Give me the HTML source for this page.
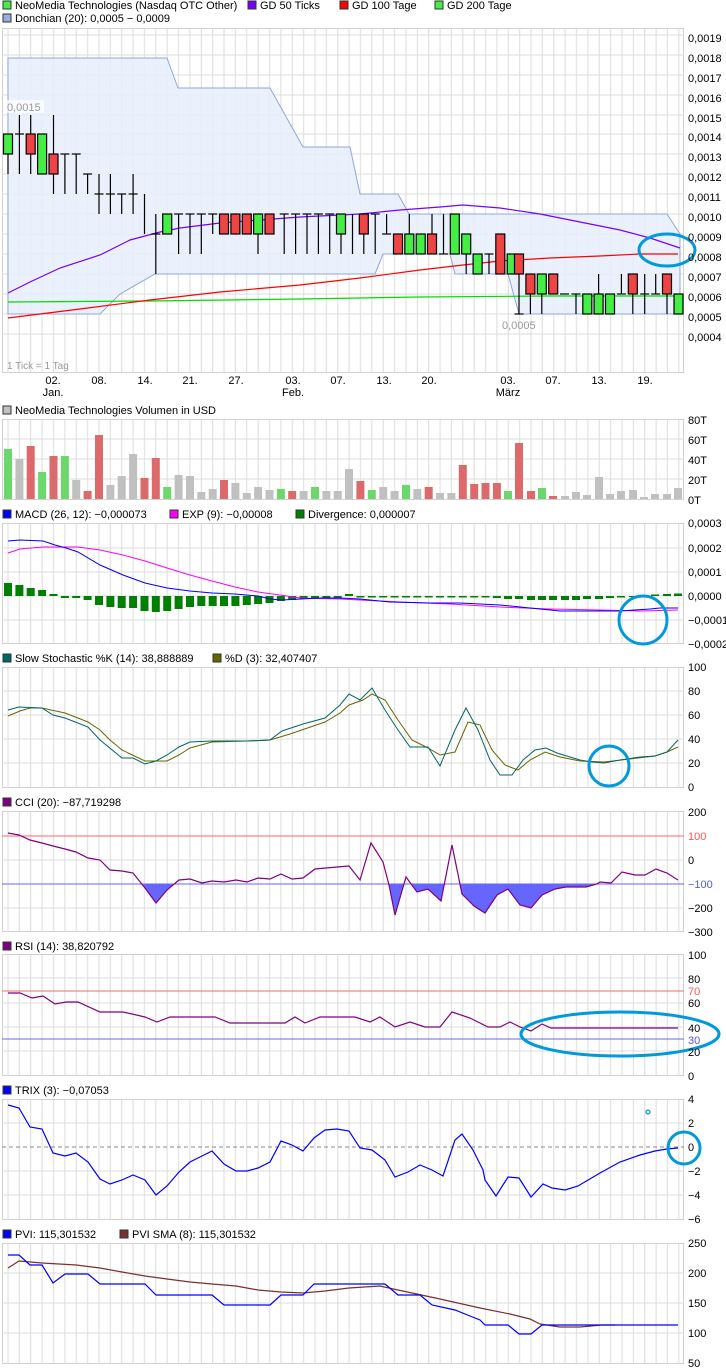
<!DOCTYPE html>
<html><head><meta charset="utf-8"><style>
html,body{margin:0;padding:0;background:#fff;width:726px;height:1372px;overflow:hidden}
svg{display:block;font-family:"Liberation Sans",sans-serif;font-size:11px}
text{fill:#000}
</style></head><body>
<svg width="726" height="1372" viewBox="0 0 726 1372" xmlns="http://www.w3.org/2000/svg">
<defs>
<pattern id="vg" x="2.315" y="0" width="11.37" height="2000" patternUnits="userSpaceOnUse">
<rect x="5.185" y="0" width="1" height="2000" fill="#dcdcdc"/>
</pattern>
<clipPath id="cciclip"><rect x="2" y="884" width="682" height="48"/></clipPath>
</defs>

<!-- ========== MAIN ========== -->
<g>
<rect x="3" y="1" width="8" height="8" fill="#44ee44" stroke="#333"/><text x="15" y="9">NeoMedia Technologies (Nasdaq OTC Other)</text>
<rect x="248" y="1" width="8" height="8" fill="#7700ff" stroke="#333"/><text x="260" y="9">GD 50 Ticks</text>
<rect x="340" y="1" width="8" height="8" fill="#ff0000" stroke="#333"/><text x="352" y="9">GD 100 Tage</text>
<rect x="435" y="1" width="8" height="8" fill="#44ee44" stroke="#333"/><text x="447" y="9">GD 200 Tage</text>
<rect x="3" y="14" width="8" height="8" fill="#99aedd" stroke="#333"/><text x="15" y="22">Donchian (20): 0,0005 − 0,0009</text>
</g>
<rect x="2.5" y="28.5" width="681" height="344" fill="url(#vg)" stroke="#d0d0d0"/>
<g stroke="#dcdcdc">
<line x1="2" y1="35" x2="684" y2="35"/><line x1="2" y1="55" x2="684" y2="55"/><line x1="2" y1="75" x2="684" y2="75"/><line x1="2" y1="95" x2="684" y2="95"/><line x1="2" y1="115" x2="684" y2="115"/><line x1="2" y1="134" x2="684" y2="134"/><line x1="2" y1="154" x2="684" y2="154"/><line x1="2" y1="174" x2="684" y2="174"/><line x1="2" y1="194" x2="684" y2="194"/><line x1="2" y1="214" x2="684" y2="214"/><line x1="2" y1="234" x2="684" y2="234"/><line x1="2" y1="254" x2="684" y2="254"/><line x1="2" y1="274" x2="684" y2="274"/><line x1="2" y1="294" x2="684" y2="294"/><line x1="2" y1="314" x2="684" y2="314"/><line x1="2" y1="334" x2="684" y2="334"/>
</g>
<!-- donchian -->
<polygon points="8,58 167,58 178,88 270,88 303,147 350,147 360,194 398,194 409,214 667,214 680,234 680,314 519,314 508,274 455,274 450,254 383,254 375,274 155,274 120,294 100,314 8,314" fill="#e6eefb" fill-opacity="0.85" stroke="#8fa8d8" stroke-width="1"/>
<!-- MAs -->
<polyline fill="none" stroke="#00dd00" stroke-width="1.2" points="8,302 150,301 300,299 420,297 550,296 678,296"/>
<polyline fill="none" stroke="#ff0000" stroke-width="1.2" points="8,318 80,309 150,300 220,292 300,285 360,278 420,270 463,265 500,261 550,258 600,256 640,254 678,254"/>
<polyline fill="none" stroke="#7700ff" stroke-width="1.2" points="8,293 30,282 60,268 100,255 130,240 160,232 180,228 220,223 260,220 300,217 360,214 400,210 440,207 463,205 500,208 540,214 580,222 620,230 650,238 680,248"/>
<!-- candles -->
<g stroke="#000" stroke-width="1.2">
<line x1="8" y1="154" x2="8" y2="174"/><rect x="3.5" y="134" width="9" height="20" fill="#44ee44"/>
<line x1="19.4" y1="115" x2="19.4" y2="174"/><line x1="15" y1="134" x2="24" y2="134"/>
<line x1="30.7" y1="115" x2="30.7" y2="174"/><rect x="26.2" y="134" width="9" height="20" fill="#ee4444"/>
<rect x="37.6" y="134" width="9" height="40" fill="#44ee44"/>
<line x1="53.5" y1="115" x2="53.5" y2="194"/><rect x="49" y="154" width="9" height="20" fill="#ee4444"/>
<line x1="64.9" y1="154" x2="64.9" y2="194"/><line x1="60.4" y1="154" x2="69.4" y2="154"/>
<line x1="76.2" y1="154" x2="76.2" y2="194"/><line x1="71.7" y1="154" x2="80.7" y2="154"/>
<line x1="87.6" y1="174" x2="87.6" y2="194"/><line x1="83.1" y1="174" x2="92.1" y2="174"/>
<line x1="99" y1="174" x2="99" y2="214"/><line x1="94.5" y1="194" x2="103.5" y2="194"/>
<line x1="110.4" y1="174" x2="110.4" y2="214"/><line x1="105.9" y1="194" x2="114.9" y2="194"/>
<line x1="121.7" y1="194" x2="121.7" y2="214"/><line x1="117.2" y1="194" x2="126.2" y2="194"/>
<line x1="133.1" y1="174" x2="133.1" y2="214"/><line x1="128.6" y1="194" x2="137.6" y2="194"/>
<line x1="144.5" y1="194" x2="144.5" y2="234"/>
<line x1="155.8" y1="214" x2="155.8" y2="274"/><line x1="151.3" y1="234" x2="160.3" y2="234"/>
<rect x="162.7" y="214" width="9" height="20" fill="#44ee44"/>
<line x1="178.6" y1="214" x2="178.6" y2="254"/><line x1="174.1" y1="214" x2="183.1" y2="214"/>
<line x1="190" y1="214" x2="190" y2="254"/><line x1="185.5" y1="214" x2="194.5" y2="214"/>
<line x1="201.3" y1="214" x2="201.3" y2="254"/><line x1="196.8" y1="214" x2="205.8" y2="214"/>
<line x1="212.7" y1="214" x2="212.7" y2="234"/><line x1="208.2" y1="214" x2="217.2" y2="214"/>
<rect x="219.5" y="214" width="9" height="20" fill="#ee4444"/>
<rect x="230.9" y="214" width="9" height="20" fill="#ee4444"/>
<rect x="242.3" y="214" width="9" height="20" fill="#ee4444"/>
<line x1="258" y1="214" x2="258" y2="254"/><rect x="253.6" y="214" width="9" height="20" fill="#44ee44"/>
<rect x="265" y="214" width="9" height="20" fill="#ee4444"/>
<line x1="284.2" y1="214" x2="284.2" y2="254"/><line x1="279.7" y1="214" x2="288.7" y2="214"/>
<line x1="295.6" y1="214" x2="295.6" y2="254"/><line x1="291.1" y1="214" x2="300.1" y2="214"/>
<line x1="307" y1="214" x2="307" y2="254"/><line x1="302.5" y1="214" x2="311.5" y2="214"/>
<line x1="318.4" y1="214" x2="318.4" y2="254"/><line x1="313.9" y1="214" x2="322.9" y2="214"/>
<line x1="329.7" y1="214" x2="329.7" y2="254"/><line x1="325.2" y1="214" x2="334.2" y2="214"/>
<line x1="341" y1="234" x2="341" y2="254"/><rect x="336.5" y="214" width="9" height="20" fill="#44ee44"/>
<line x1="352.5" y1="214" x2="352.5" y2="254"/>
<line x1="363.8" y1="234" x2="363.8" y2="254"/><rect x="359.3" y="214" width="9" height="20" fill="#ee4444"/>
<line x1="375.2" y1="214" x2="375.2" y2="254"/><line x1="370.7" y1="214" x2="379.7" y2="214"/>
<line x1="386.6" y1="214" x2="386.6" y2="234"/><line x1="382.1" y1="234" x2="391.1" y2="234"/>
<rect x="393.5" y="234" width="9" height="20" fill="#ee4444"/>
<line x1="409.3" y1="214" x2="409.3" y2="234"/><rect x="404.8" y="234" width="9" height="20" fill="#44ee44"/>
<rect x="416.2" y="234" width="9" height="20" fill="#44ee44"/>
<line x1="432" y1="214" x2="432" y2="234"/><rect x="427.5" y="234" width="9" height="20" fill="#ee4444"/>
<line x1="443.5" y1="214" x2="443.5" y2="254"/><line x1="439" y1="254" x2="448" y2="254"/>
<rect x="450.3" y="214" width="9" height="40" fill="#44ee44"/>
<line x1="466.2" y1="254" x2="466.2" y2="274"/><rect x="461.7" y="234" width="9" height="20" fill="#44ee44"/>
<rect x="473.1" y="254" width="9" height="20" fill="#44ee44"/>
<line x1="489" y1="254" x2="489" y2="274"/><line x1="484.5" y1="254" x2="493.5" y2="254"/>
<rect x="495.8" y="234" width="9" height="40" fill="#ee4444"/>
<rect x="507.2" y="254" width="9" height="20" fill="#44ee44"/>
<line x1="519" y1="274" x2="519" y2="314"/><line x1="514.5" y1="314" x2="523.5" y2="314"/><rect x="514.5" y="254" width="9" height="20" fill="#ee4444"/>
<line x1="530.4" y1="294" x2="530.4" y2="314"/><rect x="525.9" y="274" width="9" height="20" fill="#ee4444"/>
<line x1="541.8" y1="294" x2="541.8" y2="314"/><rect x="537.3" y="274" width="9" height="20" fill="#44ee44"/>
<rect x="548.7" y="274" width="9" height="20" fill="#ee4444"/>
<line x1="564.5" y1="294" x2="564.5" y2="294"/><line x1="560" y1="294" x2="569" y2="294"/>
<line x1="576" y1="294" x2="576" y2="314"/><line x1="571.5" y1="294" x2="580.5" y2="294"/>
<rect x="582.8" y="294" width="9" height="20" fill="#44ee44"/>
<line x1="598.6" y1="274" x2="598.6" y2="294"/><rect x="594.1" y="294" width="9" height="20" fill="#44ee44"/>
<rect x="605.5" y="294" width="9" height="20" fill="#44ee44"/>
<line x1="621.4" y1="274" x2="621.4" y2="294"/><line x1="616.9" y1="294" x2="625.9" y2="294"/>
<line x1="632.8" y1="294" x2="632.8" y2="314"/><rect x="628.3" y="274" width="9" height="20" fill="#ee4444"/>
<line x1="644.7" y1="274" x2="644.7" y2="314"/><line x1="640.2" y1="294" x2="649.2" y2="294"/>
<line x1="655.7" y1="274" x2="655.7" y2="294"/><line x1="651.2" y1="294" x2="660.2" y2="294"/>
<line x1="667" y1="294" x2="667" y2="314"/><rect x="662.5" y="274" width="9" height="20" fill="#ee4444"/>
<rect x="674" y="294" width="9" height="20" fill="#44ee44"/>
</g>
<rect x="6" y="100" width="38" height="13" fill="#fff" fill-opacity="0.7"/>
<text x="7" y="111" style="fill:#999">0,0015</text>
<text x="502" y="329" style="fill:#999">0,0005</text>
<text x="7" y="369" style="fill:#999;font-size:10px">1 Tick = 1 Tag</text>
<ellipse cx="667" cy="250" rx="28" ry="16" fill="none" stroke="#0099dd" stroke-width="3"/>
<g>
<text x="688" y="42">0,0019</text><text x="688" y="62">0,0018</text><text x="688" y="82">0,0017</text><text x="688" y="102">0,0016</text><text x="688" y="122">0,0015</text><text x="688" y="141">0,0014</text><text x="688" y="161">0,0013</text><text x="688" y="181">0,0012</text><text x="688" y="201">0,0011</text><text x="688" y="221">0,0010</text><text x="688" y="241">0,0009</text><text x="688" y="261">0,0008</text><text x="688" y="281">0,0007</text><text x="688" y="301">0,0006</text><text x="688" y="321">0,0005</text><text x="688" y="341">0,0004</text>
</g>
<g text-anchor="middle">
<text x="53" y="384">02.</text><text x="53" y="396">Jan.</text>
<text x="99" y="384">08.</text><text x="145" y="384">14.</text><text x="190" y="384">21.</text><text x="236" y="384">27.</text>
<text x="293" y="384">03.</text><text x="293" y="396">Feb.</text>
<text x="338" y="384">07.</text><text x="384" y="384">13.</text><text x="429" y="384">20.</text>
<text x="508" y="384">03.</text><text x="508" y="396">März</text>
<text x="553" y="384">07.</text><text x="599" y="384">13.</text><text x="645" y="384">19.</text>
</g>

<!-- ========== VOLUME ========== -->
<rect x="3" y="406" width="8" height="8" fill="#c0c0c0" stroke="#333"/><text x="15" y="414">NeoMedia Technologies Volumen in USD</text>
<rect x="2.5" y="419.5" width="681" height="80" fill="url(#vg)" stroke="#d0d0d0"/>
<g stroke="#dcdcdc"><line x1="2" y1="439" x2="684" y2="439"/><line x1="2" y1="459" x2="684" y2="459"/><line x1="2" y1="479" x2="684" y2="479"/></g>
<g>
<rect x="4" y="449" width="8" height="50" fill="#6cd86c"/>
<rect x="15.4" y="459" width="8" height="40" fill="#c0c0c0"/>
<rect x="26.7" y="446" width="8" height="53" fill="#dc6a6a"/>
<rect x="38.1" y="472" width="8" height="27" fill="#6cd86c"/>
<rect x="49.5" y="456" width="8" height="43" fill="#dc6a6a"/>
<rect x="60.9" y="456" width="8" height="43" fill="#6cd86c"/>
<rect x="72.2" y="480" width="8" height="19" fill="#c0c0c0"/>
<rect x="83.6" y="491" width="8" height="8" fill="#dc6a6a"/>
<rect x="95" y="435" width="8" height="64" fill="#dc6a6a"/>
<rect x="106.4" y="485" width="8" height="14" fill="#c0c0c0"/>
<rect x="117.7" y="476" width="8" height="23" fill="#c0c0c0"/>
<rect x="129.1" y="454" width="8" height="45" fill="#c0c0c0"/>
<rect x="140.5" y="478" width="8" height="21" fill="#dc6a6a"/>
<rect x="151.8" y="458" width="8" height="41" fill="#dc6a6a"/>
<rect x="163.2" y="487" width="8" height="12" fill="#6cd86c"/>
<rect x="174.6" y="475" width="8" height="24" fill="#c0c0c0"/>
<rect x="186" y="476" width="8" height="23" fill="#c0c0c0"/>
<rect x="197.3" y="492" width="8" height="7" fill="#c0c0c0"/>
<rect x="208.7" y="489" width="8" height="10" fill="#c0c0c0"/>
<rect x="220" y="480" width="8" height="19" fill="#dc6a6a"/>
<rect x="231.4" y="483" width="8" height="16" fill="#c0c0c0"/>
<rect x="242.8" y="493" width="8" height="6" fill="#c0c0c0"/>
<rect x="254.1" y="487" width="8" height="12" fill="#c0c0c0"/>
<rect x="265.5" y="490" width="8" height="9" fill="#c0c0c0"/>
<rect x="276.9" y="489" width="8" height="10" fill="#6cd86c"/>
<rect x="288.2" y="491" width="8" height="8" fill="#dc6a6a"/>
<rect x="299.6" y="491" width="8" height="8" fill="#c0c0c0"/>
<rect x="311" y="487" width="8" height="12" fill="#6cd86c"/>
<rect x="322.4" y="491" width="8" height="8" fill="#c0c0c0"/>
<rect x="333.7" y="491" width="8" height="8" fill="#c0c0c0"/>
<rect x="345" y="469" width="8" height="30" fill="#c0c0c0"/>
<rect x="356.4" y="481" width="8" height="18" fill="#dc6a6a"/>
<rect x="367.8" y="490" width="8" height="9" fill="#6cd86c"/>
<rect x="379.2" y="487" width="8" height="12" fill="#c0c0c0"/>
<rect x="390.6" y="491" width="8" height="8" fill="#c0c0c0"/>
<rect x="402" y="485" width="8" height="14" fill="#6cd86c"/>
<rect x="413.3" y="489" width="8" height="10" fill="#c0c0c0"/>
<rect x="424.7" y="487" width="8" height="12" fill="#dc6a6a"/>
<rect x="436" y="493" width="8" height="6" fill="#c0c0c0"/>
<rect x="447.4" y="493" width="8" height="6" fill="#c0c0c0"/>
<rect x="458.8" y="465" width="8" height="34" fill="#dc6a6a"/>
<rect x="470.2" y="484" width="8" height="15" fill="#dc6a6a"/>
<rect x="481.5" y="483" width="8" height="16" fill="#dc6a6a"/>
<rect x="492.9" y="483" width="8" height="16" fill="#dc6a6a"/>
<rect x="504" y="491" width="8" height="8" fill="#6cd86c"/>
<rect x="515" y="443" width="8" height="56" fill="#dc6a6a"/>
<rect x="527" y="491" width="8" height="8" fill="#dc6a6a"/>
<rect x="538" y="488" width="8" height="11" fill="#6cd86c"/>
<rect x="549" y="496" width="8" height="3" fill="#dc6a6a"/>
<rect x="561" y="496" width="8" height="3" fill="#c0c0c0"/>
<rect x="572" y="492" width="8" height="7" fill="#c0c0c0"/>
<rect x="583" y="495" width="8" height="4" fill="#c0c0c0"/>
<rect x="595" y="477" width="8" height="22" fill="#c0c0c0"/>
<rect x="606" y="494" width="8" height="5" fill="#c0c0c0"/>
<rect x="617" y="491" width="8" height="8" fill="#c0c0c0"/>
<rect x="629" y="490" width="8" height="9" fill="#c0c0c0"/>
<rect x="640" y="497" width="8" height="2" fill="#c0c0c0"/>
<rect x="651" y="494" width="8" height="5" fill="#c0c0c0"/>
<rect x="663" y="494" width="8" height="5" fill="#c0c0c0"/>
<rect x="674" y="488" width="8" height="11" fill="#c0c0c0"/>
</g>
<text x="688" y="424">80T</text><text x="688" y="444">60T</text><text x="688" y="464">40T</text><text x="688" y="484">20T</text><text x="688" y="504">0T</text>

<!-- ========== MACD ========== -->
<rect x="3" y="510" width="8" height="8" fill="#0000ff" stroke="#333"/><text x="15" y="518">MACD (26, 12): −0,000073</text>
<rect x="170" y="510" width="8" height="8" fill="#ff00ff" stroke="#333"/><text x="182" y="518">EXP (9): −0,00008</text>
<rect x="296" y="510" width="8" height="8" fill="#008000" stroke="#333"/><text x="308" y="518">Divergence: 0,000007</text>
<rect x="2.5" y="523.5" width="681" height="120" fill="url(#vg)" stroke="#d0d0d0"/>
<g stroke="#dcdcdc"><line x1="2" y1="548" x2="684" y2="548"/><line x1="2" y1="572" x2="684" y2="572"/><line x1="2" y1="596" x2="684" y2="596"/><line x1="2" y1="620" x2="684" y2="620"/></g>
<g fill="#008000">
<rect x="4" y="583" width="8" height="13"/><rect x="15.4" y="585" width="8" height="11"/><rect x="26.7" y="588" width="8" height="8"/><rect x="38.1" y="590" width="8" height="6"/><rect x="49.5" y="594" width="8" height="2"/>
<rect x="60.9" y="596" width="8" height="2"/><rect x="72.2" y="596" width="8" height="2"/><rect x="83.6" y="596" width="8" height="4"/><rect x="95" y="596" width="8" height="9"/><rect x="106.4" y="596" width="8" height="11"/><rect x="117.7" y="596" width="8" height="12"/><rect x="129.1" y="596" width="8" height="12"/><rect x="140.5" y="596" width="8" height="15"/><rect x="151.8" y="596" width="8" height="16"/><rect x="163.2" y="596" width="8" height="15"/><rect x="174.6" y="596" width="8" height="13"/><rect x="186" y="596" width="8" height="11"/><rect x="197.3" y="596" width="8" height="10"/><rect x="208.7" y="596" width="8" height="10"/><rect x="220" y="596" width="8" height="10"/><rect x="231.4" y="596" width="8" height="10"/><rect x="242.8" y="596" width="8" height="9"/><rect x="254.1" y="596" width="8" height="8"/><rect x="265.5" y="596" width="8" height="7"/><rect x="276.9" y="596" width="8" height="5"/><rect x="288.2" y="596" width="8" height="4"/><rect x="299.6" y="596" width="8" height="3"/><rect x="311" y="596" width="8" height="2"/><rect x="322.4" y="596" width="8" height="1.5"/><rect x="333.7" y="596" width="8" height="1.5"/><rect x="345" y="594" width="8" height="2"/><rect x="356.4" y="596" width="8" height="1.5"/>
<rect x="367.8" y="596" width="8" height="1.5"/><rect x="379.2" y="596" width="8" height="1.5"/><rect x="390.6" y="596" width="8" height="1.5"/><rect x="402" y="596" width="8" height="1.5"/><rect x="413.3" y="596" width="8" height="1.5"/><rect x="424.7" y="596" width="8" height="1.5"/><rect x="436" y="596" width="8" height="1.5"/><rect x="447.4" y="596" width="8" height="1.5"/><rect x="458.8" y="596" width="8" height="1.5"/><rect x="470.2" y="596" width="8" height="1.5"/><rect x="481.5" y="596" width="8" height="1.5"/><rect x="492.9" y="596" width="8" height="2"/>
<rect x="504" y="596" width="8" height="3"/><rect x="515" y="596" width="8" height="3"/><rect x="527" y="596" width="8" height="4"/><rect x="538" y="596" width="8" height="4"/><rect x="549" y="596" width="8" height="4"/><rect x="561" y="596" width="8" height="4"/><rect x="572" y="596" width="8" height="4"/><rect x="583" y="596" width="8" height="3"/><rect x="595" y="596" width="8" height="3"/><rect x="606" y="596" width="8" height="2"/><rect x="617" y="596" width="8" height="1.5"/><rect x="629" y="596" width="8" height="1"/><rect x="640" y="595" width="8" height="1"/><rect x="651" y="594.5" width="8" height="1.5"/><rect x="663" y="594" width="8" height="2"/><rect x="674" y="593.5" width="8" height="2.5"/>
</g>
<polyline fill="none" stroke="#ff00ff" stroke-width="1" points="8,553 20,549 43,547 78,547 100,550 123,555 145,561 167,568 190,575 212,581 235,587 258,592 280,595 300,598 340,599 400,602 450,604 500,607 550,609 600,610 640,611 678,610"/>
<polyline fill="none" stroke="#0000ff" stroke-width="1" points="8,541 20,540 43,541 55,545 66,548 78,552 100,565 123,575 145,583 167,588 190,591 212,593 235,594 258,596 270,599 282,600 320,598 340,598 360,599 390,602 430,603 460,603 500,605 530,608 560,611 620,611 650,609 660,608 678,608"/>
<circle cx="643" cy="620" r="24" fill="none" stroke="#0099dd" stroke-width="3"/>
<text x="688" y="527">0,0003</text><text x="688" y="552">0,0002</text><text x="688" y="576">0,0001</text><text x="688" y="600">0,0000</text><text x="688" y="624">−0,0001</text><text x="688" y="648">−0,0002</text>

<!-- ========== STOCH ========== -->
<rect x="3" y="654" width="8" height="8" fill="#006666" stroke="#333"/><text x="15" y="662">Slow Stochastic %K (14): 38,888889</text>
<rect x="213" y="654" width="8" height="8" fill="#666600" stroke="#333"/><text x="225" y="662">%D (3): 32,407407</text>
<rect x="2.5" y="667.5" width="681" height="120" fill="url(#vg)" stroke="#d0d0d0"/>
<g stroke="#dcdcdc"><line x1="2" y1="691" x2="684" y2="691"/><line x1="2" y1="715" x2="684" y2="715"/><line x1="2" y1="739" x2="684" y2="739"/><line x1="2" y1="763" x2="684" y2="763"/></g>
<polyline fill="none" stroke="#666600" stroke-width="1" points="8,716 20,711 30,708 42,708 65,713 88,722 100,730 110,740 122,750 145,761 167,761 179,755 190,748 212,742 247,741 270,740 290,734 325,722 340,713 349,705 363,700 372,694 385,700 398,720 412,740 428,748 440,755 455,752 468,722 480,725 492,750 505,765 518,770 530,760 545,752 560,757 580,761 604,762 630,759 655,756 667,752 678,747"/>
<polyline fill="none" stroke="#006666" stroke-width="1" points="8,710 19,707 42,708 53,715 65,718 88,727 100,740 122,758 133,758 145,764 156,761 167,755 179,747 190,742 212,741 247,741 270,740 282,731 303,724 325,718 340,705 349,694 360,700 372,688 385,710 398,730 410,747 428,747 440,766 455,730 466,708 478,730 490,760 500,775 512,775 523,760 535,750 546,748 557,753 570,757 580,760 592,762 604,763 620,760 640,757 655,756 667,752 678,740"/>
<circle cx="609" cy="766" r="20" fill="none" stroke="#0099dd" stroke-width="3"/>
<text x="688" y="671">100</text><text x="688" y="695">80</text><text x="688" y="719">60</text><text x="688" y="743">40</text><text x="688" y="767">20</text><text x="688" y="791">0</text>

<!-- ========== CCI ========== -->
<rect x="3" y="798" width="8" height="8" fill="#800080" stroke="#333"/><text x="15" y="806">CCI (20): −87,719298</text>
<rect x="2.5" y="811.5" width="681" height="120" fill="url(#vg)" stroke="#d0d0d0"/>
<g stroke="#dcdcdc"><line x1="2" y1="860" x2="684" y2="860"/><line x1="2" y1="908" x2="684" y2="908"/></g>
<line x1="2" y1="836" x2="684" y2="836" stroke="#ff6666"/>
<polygon clip-path="url(#cciclip)" fill="#6666ff" points="8,884 8,833 19,835 30,840 42,843 53,846 65,849 76,852 88,858 100,860 110,870 122,871 133,873 145,888 156,903 167,890 179,880 190,879 202,883 212,881 224,882 236,880 247,882 258,878 270,879 281,874 292,879 303,878 315,869 326,868 337,867 349,866 360,880 371,843 383,862 389,885 395,915 406,877 417,892 428,889 441,901 452,845 462,894 474,906 485,913 497,895 508,889 520,905 531,908 542,895 555,889 566,887 586,887 597,884 600,882 611,883 622,872 635,875 645,875 656,869 667,873 678,880 678,884"/>
<line x1="2" y1="884" x2="684" y2="884" stroke="#6666ff"/>
<polyline fill="none" stroke="#800080" stroke-width="1.2" points="8,833 19,835 30,840 42,843 53,846 65,849 76,852 88,858 100,860 110,870 122,871 133,873 145,888 156,903 167,890 179,880 190,879 202,883 212,881 224,882 236,880 247,882 258,878 270,879 281,874 292,879 303,878 315,869 326,868 337,867 349,866 360,880 371,843 383,862 389,885 395,915 406,877 417,892 428,889 441,901 452,845 462,894 474,906 485,913 497,895 508,889 520,905 531,908 542,895 555,889 566,887 586,887 597,884 600,882 611,883 622,872 635,875 645,875 656,869 667,873 678,880"/>
<text x="688" y="816">200</text><text x="688" y="840" style="fill:#ff5555">100</text><text x="688" y="864">0</text><text x="688" y="888" style="fill:#5555ff">−100</text><text x="688" y="912">−200</text><text x="688" y="936">−300</text>

<!-- ========== RSI ========== -->
<rect x="3" y="942" width="8" height="8" fill="#800080" stroke="#333"/><text x="15" y="950">RSI (14): 38,820792</text>
<rect x="2.5" y="954.5" width="681" height="121" fill="url(#vg)" stroke="#d0d0d0"/>
<g stroke="#dcdcdc"><line x1="2" y1="978" x2="684" y2="978"/><line x1="2" y1="1003" x2="684" y2="1003"/><line x1="2" y1="1027" x2="684" y2="1027"/><line x1="2" y1="1051" x2="684" y2="1051"/></g>
<line x1="2" y1="991" x2="684" y2="991" stroke="#ff6666"/>
<line x1="2" y1="1039" x2="684" y2="1039" stroke="#6666ff"/>
<polyline fill="none" stroke="#800080" stroke-width="1.2" points="8,993 20,993 32,998 43,996 55,1004 66,1002 78,1002 100,1012 123,1012 145,1017 157,1022 170,1017 215,1017 230,1023 285,1023 295,1017 305,1023 320,1017 355,1017 370,1022 380,1017 395,1027 410,1022 425,1027 440,1027 452,1012 470,1018 488,1027 500,1027 510,1022 520,1027 531,1031 542,1024 551,1028 678,1028"/>
<ellipse cx="620" cy="1034" rx="99" ry="22" fill="none" stroke="#0099dd" stroke-width="3"/>
<text x="688" y="959">100</text><text x="688" y="983">80</text><text x="688" y="995" style="fill:#ff5555">70</text><text x="688" y="1007">60</text><text x="688" y="1032">40</text><text x="688" y="1044" style="fill:#5555ff">30</text><text x="688" y="1056">20</text><text x="688" y="1080">0</text>

<!-- ========== TRIX ========== -->
<rect x="3" y="1086" width="8" height="8" fill="#0000ff" stroke="#333"/><text x="15" y="1094">TRIX (3): −0,07053</text>
<rect x="2.5" y="1099.5" width="681" height="120" fill="url(#vg)" stroke="#d0d0d0"/>
<g stroke="#dcdcdc"><line x1="2" y1="1123" x2="684" y2="1123"/><line x1="2" y1="1171" x2="684" y2="1171"/><line x1="2" y1="1195" x2="684" y2="1195"/></g>
<line x1="2" y1="1147" x2="684" y2="1147" stroke="#888" stroke-dasharray="4,3"/>
<polyline fill="none" stroke="#0000ff" stroke-width="1.2" points="8,1105 19,1108 30,1127 42,1129 53,1153 65,1156 76,1153 88,1162 100,1179 110,1184 122,1180 133,1175 145,1180 156,1195 167,1186 179,1172 190,1162 202,1156 212,1151 224,1164 236,1171 247,1171 258,1168 270,1162 281,1141 292,1145 303,1151 314,1138 325,1130 337,1129 349,1131 360,1148 372,1150 385,1160 395,1177 408,1172 420,1165 432,1170 443,1176 455,1140 462,1134 473,1150 483,1170 485,1180 496,1196 508,1177 519,1178 531,1197 543,1184 552,1188 565,1190 578,1186 600,1173 620,1162 640,1155 655,1151 667,1149 678,1148"/>
<circle cx="648" cy="1112" r="2" fill="none" stroke="#0099dd" stroke-width="1.2"/>
<circle cx="684" cy="1148" r="16" fill="none" stroke="#0099dd" stroke-width="3"/>
<text x="688" y="1103">4</text><text x="688" y="1127">2</text><text x="688" y="1151">0</text><text x="688" y="1175">−2</text><text x="688" y="1199">−4</text><text x="688" y="1223">−6</text>

<!-- ========== PVI ========== -->
<rect x="3" y="1230" width="8" height="8" fill="#0000ff" stroke="#333"/><text x="15" y="1238">PVI: 115,301532</text>
<rect x="120" y="1230" width="8" height="8" fill="#7a3030" stroke="#333"/><text x="132" y="1238">PVI SMA (8): 115,301532</text>
<rect x="2.5" y="1243.5" width="681" height="120" fill="url(#vg)" stroke="#d0d0d0"/>
<g stroke="#dcdcdc"><line x1="2" y1="1273" x2="684" y2="1273"/><line x1="2" y1="1303" x2="684" y2="1303"/><line x1="2" y1="1333" x2="684" y2="1333"/></g>
<polyline fill="none" stroke="#7a3030" stroke-width="1.2" points="8,1268 19,1261 42,1263 76,1265 100,1268 122,1272 145,1276 167,1279 190,1282 212,1284 236,1286 258,1290 281,1292 303,1293 325,1291 349,1288 380,1286 398,1290 440,1299 480,1308 510,1314 530,1319 540,1324 560,1327 580,1327 602,1325 615,1325"/>
<polyline fill="none" stroke="#0000ff" stroke-width="1.2" points="8,1255 19,1255 30,1265 42,1265 53,1283 65,1274 88,1274 100,1284 145,1284 156,1295 212,1295 224,1305 270,1305 281,1295 303,1295 314,1284 385,1284 398,1295 420,1295 432,1305 455,1310 470,1316 480,1320 485,1325 508,1325 519,1334 531,1334 542,1325 678,1325"/>
<text x="688" y="1247">250</text><text x="688" y="1277">200</text><text x="688" y="1307">150</text><text x="688" y="1337">100</text><text x="688" y="1367">50</text>
</svg>
</body></html>
